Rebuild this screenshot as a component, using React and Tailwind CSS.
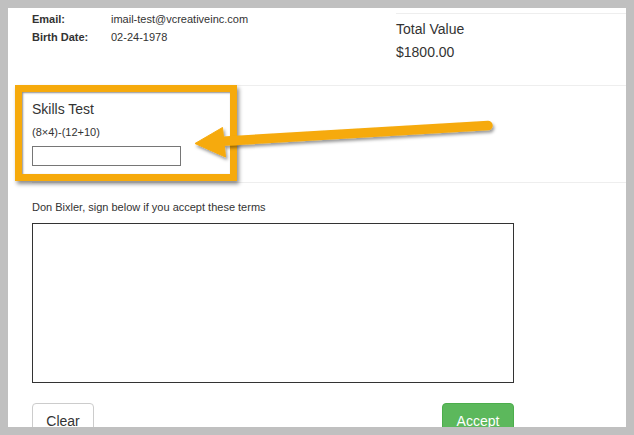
import React from 'react';

const font = { fontFamily: '"Liberation Sans", Arial, sans-serif' };

const InfoRow = ({ label, value }) => (
  <div className="flex h-[18px] leading-[18px] text-[11px]">
    <span className="w-[79px] font-bold">{label}</span>
    <span>{value}</span>
  </div>
);

const App = () => {
  return (
    <div className="relative w-[634px] h-[435px] bg-[#c0c0c0] p-2 overflow-hidden" style={font}>
      <div className="relative w-full h-full bg-white overflow-hidden text-[#333]">
        {/* customer info + total */}
        <div className="flex h-[78px] border-b border-[#eeeeee] ml-6 box-border">
          <div className="w-[364px] pt-[2px]">
            <InfoRow label="Email:" value="imail-test@vcreativeinc.com" />
            <InfoRow label="Birth Date:" value="02-24-1978" />
          </div>
          <div className="flex-1 mt-[5px] border-t border-[#eeeeee] pt-[5px] text-[14px] leading-5">
            <div>Total Value</div>
            <div className="mt-[3px]">$1800.00</div>
          </div>
        </div>

        {/* skills test */}
        <div className="h-[97px] border-b border-[#eeeeee] ml-6 box-border pt-[13px]">
          <div className="text-[14px] leading-5">Skills Test</div>
          <div className="mt-1 text-[11px] leading-[18px]">(8×4)-(12+10)</div>
          <input
            type="text"
            className="mt-[5px] block w-[149px] h-[20px] border border-[#767676] outline-none px-1 text-[11px]"
          />
        </div>

        {/* signature */}
        <div className="ml-6 pt-[15px]">
          <div className="text-[11px] leading-[18px]">Don Bixler, sign below if you accept these terms</div>
          <div className="mt-[7px] w-[482px] h-[160px] border border-[#333]" />
          <div className="mt-5 w-[482px] flex justify-between">
            <button className="w-[62px] h-[34px] pt-[2px] rounded-[4px] border border-[#cccccc] bg-white text-[14px] leading-5 text-[#333]">
              Clear
            </button>
            <button className="w-[72px] h-[34px] pt-[2px] rounded-[4px] border border-[#4cae4c] bg-[#5cb85c] text-[14px] leading-5 text-white">
              Accept
            </button>
          </div>
        </div>

        {/* annotation box */}
        <div className="absolute left-[7px] top-[77px] w-[222px] h-[96px] border-[7px] border-[#f6aa0c] shadow-[2px_3px_4px_rgba(0,0,0,0.45),inset_1px_1px_2px_rgba(0,0,0,0.45)] pointer-events-none" />
      </div>

      {/* annotation arrow */}
      <svg className="absolute inset-0 pointer-events-none" width="634" height="435" viewBox="0 0 634 435">
        <defs>
          <filter id="sh" x="-10%" y="-50%" width="120%" height="200%">
            <feDropShadow dx="1.5" dy="2.5" stdDeviation="1.6" floodColor="#000" floodOpacity="0.4" />
          </filter>
        </defs>
        <g filter="url(#sh)" fill="#f6aa0c" stroke="#f6aa0c">
          <line x1="488" y1="125.5" x2="218" y2="141.5" strokeWidth="9.5" strokeLinecap="round" />
          <polygon points="195,143.5 222.5,127.5 225.5,157" strokeWidth="1" strokeLinejoin="round" />
        </g>
      </svg>
    </div>
  );
};

export default App;
